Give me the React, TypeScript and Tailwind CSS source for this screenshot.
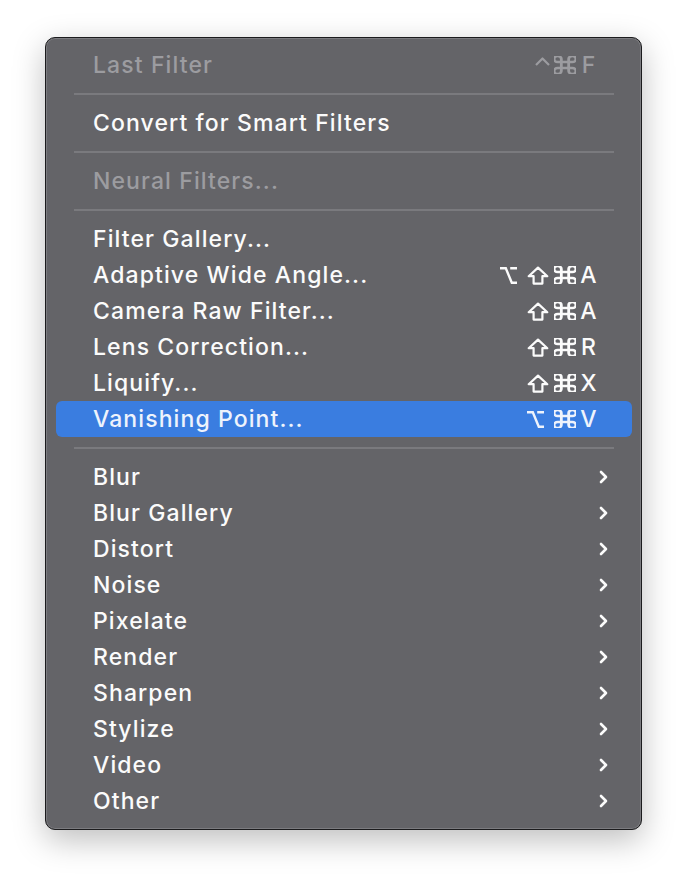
import React from 'react';

type Key = 'ctrl' | 'opt' | 'shift' | 'cmd' | string;

type Entry =
  | { kind: 'sep' }
  | { kind: 'item'; label: string; disabled?: boolean; active?: boolean; keys?: Key[]; submenu?: boolean };

const ENTRIES: Entry[] = [
  { kind: 'item', label: 'Last Filter', disabled: true, keys: ['ctrl', 'cmd', 'F'] },
  { kind: 'sep' },
  { kind: 'item', label: 'Convert for Smart Filters' },
  { kind: 'sep' },
  { kind: 'item', label: 'Neural Filters...', disabled: true },
  { kind: 'sep' },
  { kind: 'item', label: 'Filter Gallery...' },
  { kind: 'item', label: 'Adaptive Wide Angle...', keys: ['opt', 'shift', 'cmd', 'A'] },
  { kind: 'item', label: 'Camera Raw Filter...', keys: ['shift', 'cmd', 'A'] },
  { kind: 'item', label: 'Lens Correction...', keys: ['shift', 'cmd', 'R'] },
  { kind: 'item', label: 'Liquify...', keys: ['shift', 'cmd', 'X'] },
  { kind: 'item', label: 'Vanishing Point...', active: true, keys: ['opt', 'cmd', 'V'] },
  { kind: 'sep' },
  ...['Blur', 'Blur Gallery', 'Distort', 'Noise', 'Pixelate', 'Render', 'Sharpen', 'Stylize', 'Video', 'Other'].map(
    (label): Entry => ({ kind: 'item', label, submenu: true })
  ),
];

function KeyGlyph({ k }: { k: Key }) {
  const common = { fill: 'none', stroke: 'currentColor', strokeLinejoin: 'round' as const };
  if (k === 'ctrl') {
    return (
      <svg width="15" height="9" viewBox="0 0 15 9" className="mr-[4px] -mt-[8px]" {...common} strokeWidth={2.2}>
        <path d="M1 8 L7.5 1.5 L14 8" />
      </svg>
    );
  }
  if (k === 'opt') {
    return (
      <svg width="17" height="17" viewBox="0 0 17 17" className="mr-[10px]" {...common} strokeWidth={2.4} strokeLinejoin="miter">
        <path d="M0 1.3 H5.8 L11.8 15.7 H17 M10.2 1.3 H17" />
      </svg>
    );
  }
  if (k === 'shift') {
    return (
      <svg width="22" height="19" viewBox="0 0 22 19" className="mr-[5px]" {...common} strokeWidth={2.2}>
        <path d="M11 1.6 L20.3 10.2 H15.4 V17.6 H6.6 V10.2 H1.7 Z" />
      </svg>
    );
  }
  if (k === 'cmd') {
    return (
      <svg
        width="22"
        height="18"
        viewBox="3 3 18 18"
        preserveAspectRatio="none"
        className="mr-[4px]"
        {...common}
        strokeWidth={2.3}
      >
        <path d="M15 6v12a3 3 0 1 0 3-3H6a3 3 0 1 0 3 3V6a3 3 0 1 0-3 3h12a3 3 0 1 0-3-3" />
      </svg>
    );
  }
  return <span className="inline-block w-[17px] text-center tracking-normal">{k}</span>;
}

function Chevron() {
  return (
    <svg width="9" height="14" viewBox="0 0 9 14" fill="none" stroke="currentColor" strokeWidth={2.6} strokeLinecap="round" strokeLinejoin="round">
      <path d="M2 2 L7 7 L2 12" />
    </svg>
  );
}

function MenuRow({ entry }: { entry: Extract<Entry, { kind: 'item' }> }) {
  const color = entry.active ? 'text-[#eef3fc]' : entry.disabled ? 'text-[#9c9ca0]' : 'text-[#fbfbfb]';
  return (
    <div
      className={`flex h-[36px] items-center rounded-[6px] pl-[37px] ${entry.submenu ? 'pr-[24px]' : 'pr-[35px]'} ${
        entry.active ? 'bg-[#3a7de0]' : ''
      } ${color}`}
    >
      <span className="flex-1 whitespace-nowrap">{entry.label}</span>
      {entry.keys && (
        <span className="flex items-center">
          {entry.keys.map((k, i) => (
            <KeyGlyph key={i} k={k} />
          ))}
        </span>
      )}
      {entry.submenu && <Chevron />}
    </div>
  );
}

export default function App() {
  return (
    <div className="min-h-[884px] w-[688px] bg-white pl-[45px] pt-[37px]">
      <div
        className="w-[597px] rounded-[10px] border border-[#1c1c1e] bg-[#646468] pb-[10px] pl-[10px] pr-[9px] pt-[9px] text-[23px] font-medium tracking-[1.1px] shadow-[0_10px_32px_rgba(0,0,0,0.26),inset_0_0_0_1px_rgba(255,255,255,0.16)]"
        style={{ fontFamily: 'Inter, "Noto Sans", "DejaVu Sans", sans-serif' }}
      >
        {ENTRIES.map((e, i) =>
          e.kind === 'sep' ? (
            <div key={i} className="flex h-[22px] items-center px-[18px]">
              <div className="h-[2px] w-full bg-[#7a7a7e]" />
            </div>
          ) : (
            <MenuRow key={i} entry={e} />
          )
        )}
      </div>
    </div>
  );
}
